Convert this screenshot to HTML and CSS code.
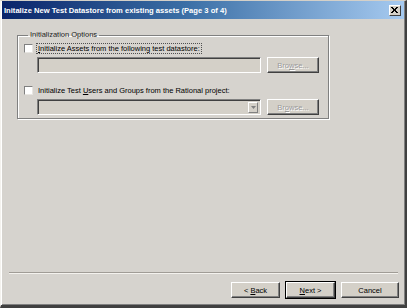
FILE: index.html
```html
<!DOCTYPE html>
<html lang="en">
  <head>
    <meta charset="UTF-8" />
    <title>Initalize New Test Datastore</title>
    <link rel="stylesheet" href="styles.css">
  </head>
  <body>
    <div class="window">
      <div class="titlebar">
        <span class="title">Initalize New Test Datastore from existing assets (Page 3 of 4)</span>
        <span class="close">
          <svg width="8" height="7" viewBox="0 0 8 7">
            <path d="M1 0 L7 6 M0 0 L6 6 M7 0 L1 6 M6 0 L0 6" stroke="#000" stroke-width="1" fill="none" />
          </svg>
        </span>
      </div>

      <div class="content">
        <fieldset class="group">
          <legend>Initialization Options</legend>

          <div class="check-row">
            <span class="checkbox"></span>
            <span class="label focus"><u>I</u>nitialize Assets from the following test datastore:</span>
          </div>
          <div class="field-row">
            <div class="textfield"></div>
            <button class="button" disabled>Bro<u>w</u>se...</button>
          </div>

          <div class="check-row second">
            <span class="checkbox"></span>
            <span class="label">Initialize Test <u>U</u>sers and Groups from the Rational project:</span>
          </div>
          <div class="field-row">
            <div class="textfield combo">
              <span class="drop">
                <svg width="5" height="3" viewBox="0 0 5 3"><path d="M0 0 H5 L2.5 3 Z" fill="#808080" /></svg>
              </span>
            </div>
            <button class="button" disabled>Br<u>o</u>wse...</button>
          </div>
        </fieldset>
      </div>

      <div class="separator"></div>

      <div class="actions">
        <button class="button">&lt; <u>B</u>ack</button>
        <button class="button default"><u>N</u>ext &gt;</button>
        <button class="button cancel">Cancel</button>
      </div>
    </div>
  </body>
</html>
```

FILE: styles.css
```css
html,
body {
  margin: 0;
  padding: 0;
  background: #d4d0c8;
}
body {
  font-family: "Liberation Sans", Arial, sans-serif;
  font-size: 7.5px;
  color: #000;
}
.window {
  box-sizing: border-box;
  width: 407px;
  height: 308px;
  display: flex;
  flex-direction: column;
  background: #d6d3ce;
  border-top: 1px solid #d4d0c8;
  border-left: 1px solid #f4f2ee;
  border-right: 2px solid #404040;
  border-bottom: 3px solid #404040;
  box-shadow: inset 1px 0 0 #ffffff, inset -1px -1px 0 #808080;
}
.titlebar {
  height: 18px;
  margin: 0 1px 0 1px;
  display: flex;
  align-items: center;
  justify-content: space-between;
  padding: 0 3px 0 2px;
  background: linear-gradient(90deg, #0a246a 0%, #3a6ea5 45%, #a6caf0 100%);
}
.title {
  color: #fff;
  font-weight: bold;
  font-size: 7.6px;
  white-space: nowrap;
}
.close {
  box-sizing: border-box;
  width: 12px;
  height: 11px;
  display: flex;
  align-items: center;
  justify-content: center;
  background: #d4d0c8;
  border-top: 1px solid #fff;
  border-left: 1px solid #fff;
  border-right: 1px solid #404040;
  border-bottom: 1px solid #404040;
}
.content {
  flex: 1;
  padding: 11px 0 0 16px;
}
.group {
  box-sizing: border-box;
  width: 312px;
  height: 89px;
  margin: 0;
  padding: 0 0 0 6px;
  border: 1px solid #808080;
  box-shadow: inset 1px 1px 0 #fff, 1px 1px 0 #fff;
}
.group legend {
  padding: 0 2px;
  margin-left: 4px;
  line-height: 10px;
  color: #202020;
}
.check-row {
  display: flex;
  align-items: center;
  gap: 4px;
  height: 11px;
  margin-top: 3px;
}
.check-row.second {
  margin-top: 12px;
}
.checkbox {
  box-sizing: border-box;
  width: 9px;
  height: 9px;
  background: #fff;
  border-top: 1px solid #808080;
  border-left: 1px solid #808080;
  border-right: 1px solid #e8e6e2;
  border-bottom: 1px solid #e8e6e2;
}
.label {
  white-space: nowrap;
  padding: 0 1px;
}
.label.focus {
  outline: 1px dotted #505050;
}
.field-row {
  display: flex;
  align-items: center;
  gap: 6px;
  margin: 3px 0 0 13px;
}
.textfield {
  box-sizing: border-box;
  width: 224px;
  height: 16px;
  background: #d4d0c8;
  border-top: 1px solid #808080;
  border-left: 1px solid #808080;
  border-right: 1px solid #fff;
  border-bottom: 1px solid #fff;
  box-shadow: inset 1px 1px 0 #404040;
}
.combo {
  display: flex;
  justify-content: flex-end;
  align-items: center;
  padding-right: 2px;
}
.drop {
  box-sizing: border-box;
  width: 10px;
  height: 11px;
  display: flex;
  align-items: center;
  justify-content: center;
  background: #d4d0c8;
  border-top: 1px solid #fff;
  border-left: 1px solid #fff;
  border-right: 1px solid #808080;
  border-bottom: 1px solid #808080;
}
.button {
  box-sizing: border-box;
  width: 52px;
  height: 16px;
  padding: 0;
  font: inherit;
  color: #000;
  background: #d4d0c8;
  border-top: 1px solid #fff;
  border-left: 1px solid #fff;
  border-right: 1px solid #404040;
  border-bottom: 1px solid #404040;
  box-shadow: inset -1px -1px 0 #808080;
}
.button:disabled {
  color: #9a9a9a;
  text-shadow: 1px 1px 0 #fff;
}
.separator {
  height: 1px;
  margin: 0 7px 0 8px;
  background: #a09c96;
  border-bottom: 1px solid #f4f2ee;
}
.actions {
  display: flex;
  justify-content: flex-end;
  gap: 3px;
  padding: 8px 6px 7px 0;
}
.actions .button {
  width: 49px;
  height: 16px;
}
.actions .default {
  outline: 1px solid #000;
  margin: 0 3px;
}
.actions .cancel {
  width: 58px;
}
```
